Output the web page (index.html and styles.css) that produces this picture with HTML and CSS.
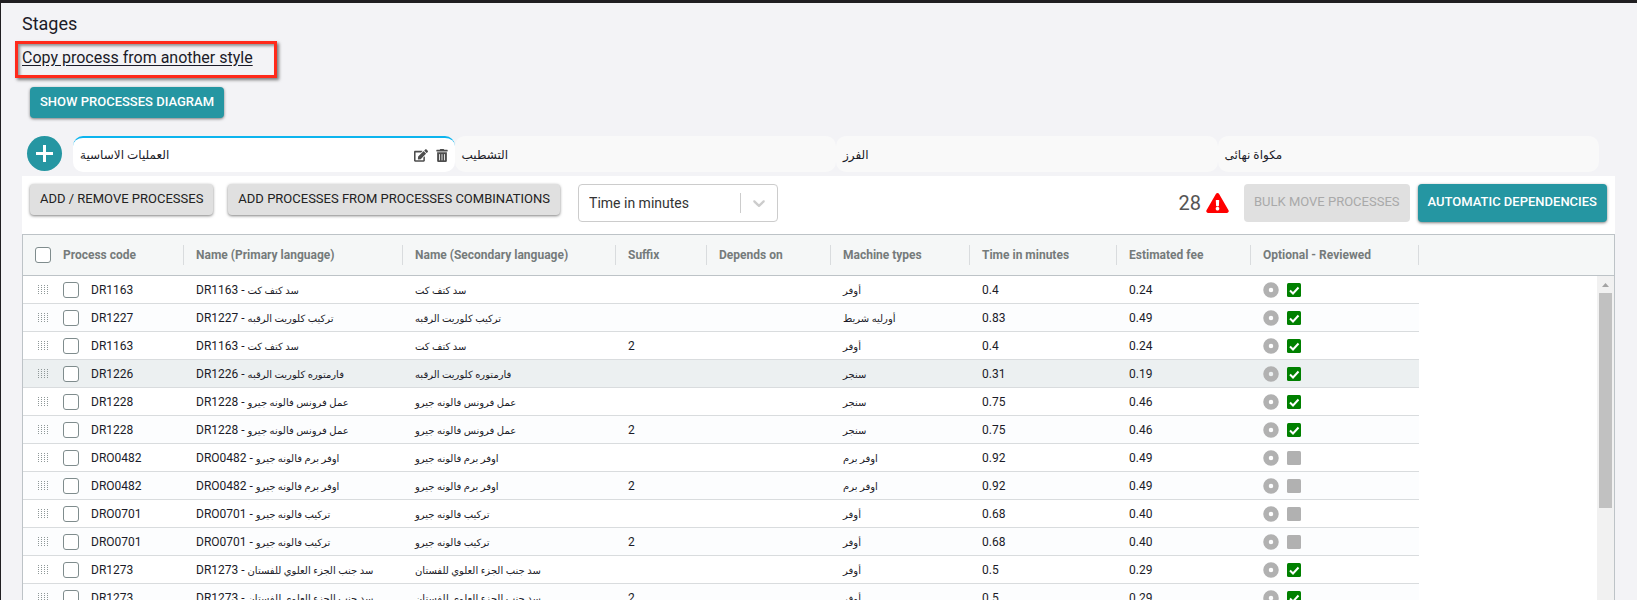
FILE: index.html
```html
<!DOCTYPE html>
<html lang="en">

<head>
    <meta charset="utf-8">
    <title>Stages</title>
    <link rel="stylesheet" href="styles.css">
</head>

<body>
    <header>
        <h1>Stages</h1>
        <div class="copyBox">
            <a href="#copy">Copy process from another style</a>
        </div>
        <button type="button" class="btn primary" id="diagramButton">Show processes diagram</button>
    </header>

    <nav class="stages">
        <button type="button" class="addStage" aria-label="Add stage">
            <svg width="17" height="17" viewBox="0 0 17 17"><path d="M8.5 0v17M0 8.5h17" stroke="#fff" stroke-width="3"/></svg>
        </button>
        <div class="tabs">
            <div class="tab active">
                <a href="#stage1" lang="ar">العمليات الاساسية</a>
                <button type="button" class="iconButton" aria-label="Edit">
                    <svg width="14" height="13" viewBox="0 0 576 512"><path fill="#4d4d4d" d="M402.6 83.2l90.2 90.2c3.8 3.8 3.8 10 0 13.8L274.4 405.6l-92.8 10.3c-12.4 1.4-22.9-9.1-21.5-21.5l10.3-92.8L388.8 83.2c3.8-3.8 10-3.8 13.8 0zm162-22.9l-48.8-48.8c-15.2-15.2-39.9-15.2-55.2 0l-35.4 35.4c-3.8 3.8-3.8 10 0 13.8l90.2 90.2c3.8 3.8 10 3.8 13.8 0l35.4-35.4c15.2-15.3 15.2-40 0-55.2zM384 346.2V448H64V128h229.8c3.2 0 6.2-1.3 8.5-3.5l40-40c7.6-7.6 2.2-20.5-8.5-20.5H48C21.5 64 0 85.5 0 112v352c0 26.5 21.5 48 48 48h352c26.5 0 48-21.5 48-48V306.2c0-10.7-12.9-16-20.5-8.5l-40 40c-2.2 2.3-3.5 5.3-3.5 8.5z"/></svg>
                </button>
                <button type="button" class="iconButton" aria-label="Delete">
                    <svg width="12" height="13" viewBox="0 0 448 512"><path fill="#4d4d4d" fill-rule="evenodd" d="M32 464a48 48 0 0 0 48 48h288a48 48 0 0 0 48-48V128H32zm272-256a16 16 0 0 1 32 0v224a16 16 0 0 1-32 0zm-96 0a16 16 0 0 1 32 0v224a16 16 0 0 1-32 0zm-96 0a16 16 0 0 1 32 0v224a16 16 0 0 1-32 0zM432 32H312l-9-19A24 24 0 0 0 281 0H167a24 24 0 0 0-22 13l-9 19H16A16 16 0 0 0 0 48v32a16 16 0 0 0 16 16h416a16 16 0 0 0 16-16V48a16 16 0 0 0-16-16z"/></svg>
                </button>
            </div>
            <div class="tab"><a href="#stage2" lang="ar">التشطيب</a></div>
            <div class="tab"><a href="#stage3" lang="ar">الفرز</a></div>
            <div class="tab"><a href="#stage4" lang="ar">مكواة نهائى</a></div>
        </div>
    </nav>

    <main>
        <div class="toolbar">
            <button type="button" class="btn">Add / Remove processes</button>
            <button type="button" class="btn">Add processes from processes combinations</button>
            <div class="selectBox">
                <select aria-label="Shown value">
                    <option>Time in minutes</option>
                </select>
                <svg width="20" height="20" viewBox="0 0 20 20"><path fill="#ccc" d="M4.516 7.548c.436-.446 1.043-.481 1.576 0L10 11.295l3.908-3.747c.533-.481 1.141-.446 1.574 0 .436.445.408 1.197 0 1.615l-4.695 4.502a1.095 1.095 0 0 1-1.576 0S4.924 9.581 4.516 9.163c-.409-.418-.436-1.17 0-1.615z"/></svg>
            </div>
            <div class="warnings">
                <span>28</span>
                <svg width="23" height="20" viewBox="0 0 576 512"><path fill="#f00" d="M569.5 440C588 472 564.8 512 527.9 512H48.1c-36.9 0-60-40.1-41.6-72L246.4 24c18.5-32 64.7-32 83.2 0l239.9 416zM288 354c-25.4 0-46 20.6-46 46s20.6 46 46 46 46-20.6 46-46-20.6-46-46-46zm-43.7-165.3l7.4 136c.4 6.4 5.6 11.3 12 11.3h48.5c6.4 0 11.6-5 12-11.3l7.4-136c.4-6.9-5.1-12.7-12-12.7h-63.4c-6.9 0-12.3 5.8-11.9 12.7z"/></svg>
            </div>
            <button type="button" class="btn tall" disabled>Bulk move processes</button>
            <button type="button" class="btn tall primary">Automatic dependencies</button>
        </div>

        <div class="grid">
            <table>
                <colgroup>
                    <col class="code"><col class="primaryName"><col class="secondaryName"><col class="suffix"><col class="depends">
                    <col class="machine"><col class="time"><col class="fee"><col class="flags"><col>
                </colgroup>
                <thead>
                    <tr>
                        <th><div class="codeCell"><input type="checkbox" aria-label="Select all"> Process code</div></th>
                        <th>Name (Primary language)</th>
                        <th>Name (Secondary language)</th>
                        <th>Suffix</th>
                        <th>Depends on</th>
                        <th>Machine types</th>
                        <th>Time in minutes</th>
                        <th>Estimated fee</th>
                        <th>Optional - Reviewed</th>
                        <td></td>
                    </tr>
                </thead>
                <tbody id="processes"></tbody>
            </table>
            <div class="scrollbar">
                <svg width="17" height="17" viewBox="0 0 17 17"><path fill="#a3a3a3" d="M5 11l3.5-4 3.5 4z"/></svg>
                <div class="thumb"></div>
            </div>
        </div>
    </main>

    <script>
        // code, name, suffix, machine, time, fee, reviewed
        const processes = [
            ["DR1163", "سد كتف كت", "", "أوفر", "0.4", "0.24", true],
            ["DR1227", "تركيب كلوريت الرقبه", "", "أورليه شريط", "0.83", "0.49", true],
            ["DR1163", "سد كتف كت", "2", "أوفر", "0.4", "0.24", true],
            ["DR1226", "فارمتوره كلوريت الرقبه", "", "سنجر", "0.31", "0.19", true],
            ["DR1228", "عمل فرونس فالونه جيرو", "", "سنجر", "0.75", "0.46", true],
            ["DR1228", "عمل فرونس فالونه جيرو", "2", "سنجر", "0.75", "0.46", true],
            ["DRO0482", "اوفر برم فالونه جيرو", "", "اوفر برم", "0.92", "0.49", false],
            ["DRO0482", "اوفر برم فالونه جيرو", "2", "اوفر برم", "0.92", "0.49", false],
            ["DRO0701", "تركيب فالونه جيرو", "", "أوفر", "0.68", "0.40", false],
            ["DRO0701", "تركيب فالونه جيرو", "2", "أوفر", "0.68", "0.40", false],
            ["DR1273", "سد جنب الجزء العلوي للفستان", "", "أوفر", "0.5", "0.29", true],
            ["DR1273", "سد جنب الجزء العلوي للفستان", "2", "أوفر", "0.5", "0.29", true]
        ];
        const hovered = 3;

        const grip = `<svg class="grip" width="11" height="9" viewBox="0 0 11 9"><path d="M.5 0v9M3.5 0v9M6.5 0v9M9.5 0v9" stroke="#8f9898" stroke-dasharray="1 1"/></svg>`;
        const optionalIcon = `<svg width="16" height="16" viewBox="0 0 16 16"><circle cx="8" cy="8" r="5" fill="none" stroke="#b1b1b1" stroke-width="5.5"/></svg>`;

        function reviewedIcon(reviewed) {
            const tick = reviewed ? `<path d="M3 7.5l3 3 5.5-6" fill="none" stroke="#fff" stroke-width="2"/>` : "";
            return `<svg width="14" height="14" viewBox="0 0 14 14"><rect width="14" height="14" rx="1.5" fill="${reviewed ? "#008000" : "#b1b1b1"}"/>${tick}</svg>`;
        }

        const body = document.getElementById("processes");
        processes.forEach(([code, name, suffix, machine, time, fee, reviewed], i) => {
            const row = body.insertRow();
            if (i === hovered) row.className = "hovered";
            row.innerHTML = `
                <td><div class="codeCell">${grip}<input type="checkbox" id="p${i}"><label for="p${i}">${code}</label></div></td>
                <td>${code} - <span lang="ar">${name}</span></td>
                <td><span lang="ar">${name}</span></td>
                <td>${suffix}</td>
                <td></td>
                <td><span lang="ar">${machine}</span></td>
                <td>${time}</td>
                <td>${fee}</td>
                <td><div class="flagsCell">${optionalIcon}${reviewedIcon(reviewed)}</div></td>
                <td></td>`;
        });
    </script>
</body>

</html>
```
FILE: styles.css
```css
* {
    box-sizing: border-box;
}

body {
    margin: 0;
    height: 100vh;
    overflow: hidden;
    display: flex;
    flex-direction: column;
    padding: 0 22px 0 21px;
    border-top: 3px solid #201e21;
    border-left: 1px solid #201e21;
    background-color: #f3f3f6;
    color: #1b1b28;
    font-family: Roboto, "DejaVu Sans", sans-serif;
}

button {
    font-family: inherit;
    cursor: pointer;
}

header {
    display: flex;
    flex-direction: column;
    align-items: flex-start;
}

h1 {
    margin: 11px 0 7px;
    font-size: 18px;
    font-weight: 400;
    line-height: 20px;
}

.copyBox {
    width: 262px;
    height: 37px;
    margin-left: -7px;
    padding: 4px;
    border: 3px solid #ff2a1b;
    box-shadow: 2px 2px 3px rgba(0, 0, 0, 0.5), inset 2px 2px 3px rgba(0, 0, 0, 0.4);
    font-size: 16px;
    line-height: 20px;
}

.copyBox a {
    color: inherit;
    text-underline-offset: 2px;
}

.btn {
    height: 31px;
    padding: 0 10px 3px;
    border: none;
    border-radius: 4px;
    background-color: #e0e0e0;
    box-shadow: 0 1px 3px rgba(0, 0, 0, 0.5);
    color: #222;
    font-size: 13px;
    text-transform: uppercase;
    white-space: nowrap;
}

.btn.primary {
    background-color: #2596a2;
    color: #fff;
    font-weight: 500;
}

.btn.tall {
    height: 38px;
}

.btn:disabled {
    box-shadow: none;
    color: #a9a9a9;
}

#diagramButton {
    margin: 9px 0 18px 8px;
}

.stages {
    display: flex;
    gap: 11px;
    padding: 0 16px 0 5px;
    margin-bottom: 4px;
}

.addStage {
    display: flex;
    align-items: center;
    justify-content: center;
    width: 35px;
    height: 35px;
    padding: 0;
    border: none;
    border-radius: 50%;
    background-color: #2596a2;
}

.tabs {
    flex: 1;
    display: grid;
    grid-template-columns: repeat(4, 1fr);
}

.tab {
    display: flex;
    align-items: center;
    gap: 8px;
    height: 36px;
    padding: 0 7px;
    border-top: 2px solid transparent;
    border-radius: 10px;
    background-color: #f9f9f9;
}

.tab.active {
    border-top-color: #0db4ee;
    background-color: #fff;
}

.tab a {
    flex: 1;
    color: inherit;
    font-size: 12px;
    text-decoration: none;
}

.iconButton {
    display: flex;
    padding: 0;
    border: none;
    background: none;
}

main {
    flex: 1;
    min-height: 0;
    display: flex;
    flex-direction: column;
    background-color: #fff;
}

.toolbar {
    display: flex;
    align-items: flex-start;
    padding: 8px 8px 12px;
    gap: 15px;
}

.selectBox {
    position: relative;
    width: 200px;
    margin-left: 3px;
}

.selectBox select {
    width: 100%;
    height: 38px;
    padding: 0 10px;
    border: 1px solid #ccc;
    border-radius: 4px;
    background-color: #fff;
    color: #333;
    font-family: inherit;
    font-size: 14px;
    appearance: none;
}

.selectBox::after {
    content: "";
    position: absolute;
    top: 9px;
    right: 37px;
    width: 1px;
    height: 20px;
    background-color: #ccc;
}

.selectBox svg {
    position: absolute;
    top: 9px;
    right: 9px;
}

.warnings {
    display: flex;
    align-items: center;
    gap: 5px;
    height: 38px;
    margin-left: auto;
    color: #555;
    font-size: 20px;
}

.toolbar .primary {
    margin-left: -7px;
}

.grid {
    position: relative;
    flex: 1;
    min-height: 0;
    overflow: hidden;
    border: 1px solid #bdc3c7;
    border-bottom: none;
}

table {
    width: 100%;
    table-layout: fixed;
    border-spacing: 0;
    font-size: 12px;
}

.code { width: 161px; }
.primaryName { width: 219px; }
.secondaryName { width: 213px; }
.suffix { width: 91px; }
.depends { width: 124px; }
.machine { width: 139px; }
.time { width: 147px; }
.fee { width: 134px; }
.flags { width: 168px; }

thead th,
thead td {
    position: relative;
    height: 41px;
    padding: 0 12px;
    border-bottom: 1px solid #bdc3c7;
    background-color: #f5f7f7;
    color: #757b7b;
    font-weight: 700;
    text-align: left;
    white-space: nowrap;
}

thead th::after {
    content: "";
    position: absolute;
    top: 10px;
    right: 0;
    width: 1px;
    height: 20px;
    background-color: #d9dcde;
}

tbody td {
    height: 28px;
    padding: 0 12px;
    border-bottom: 1px solid #d9dcde;
    line-height: 16px;
    white-space: nowrap;
}

tbody tr:nth-child(even) td {
    background-color: #fcfdfe;
}

tbody tr.hovered td {
    background-color: #ecf0f1;
}

tbody tr td:last-child {
    border: none;
    background-color: #fff;
}

tbody [lang="ar"] {
    font-size: 10px;
    line-height: 12px;
}

.codeCell,
.flagsCell {
    display: flex;
    align-items: center;
}

.codeCell {
    gap: 12px;
}

.flagsCell {
    gap: 8px;
}

.grip {
    margin: 0 2px 0 3px;
}

input[type="checkbox"] {
    appearance: none;
    width: 16px;
    height: 16px;
    margin: 0;
    border: 1px solid #7f8c8d;
    border-radius: 3px;
    background-color: #fff;
}

.scrollbar {
    position: absolute;
    top: 41px;
    right: 0;
    bottom: 0;
    width: 17px;
    background-color: #f1f1f1;
}

.scrollbar svg {
    display: block;
}

.thumb {
    height: 215px;
    margin: 0 2px;
    background-color: #c1c1c1;
}
```
